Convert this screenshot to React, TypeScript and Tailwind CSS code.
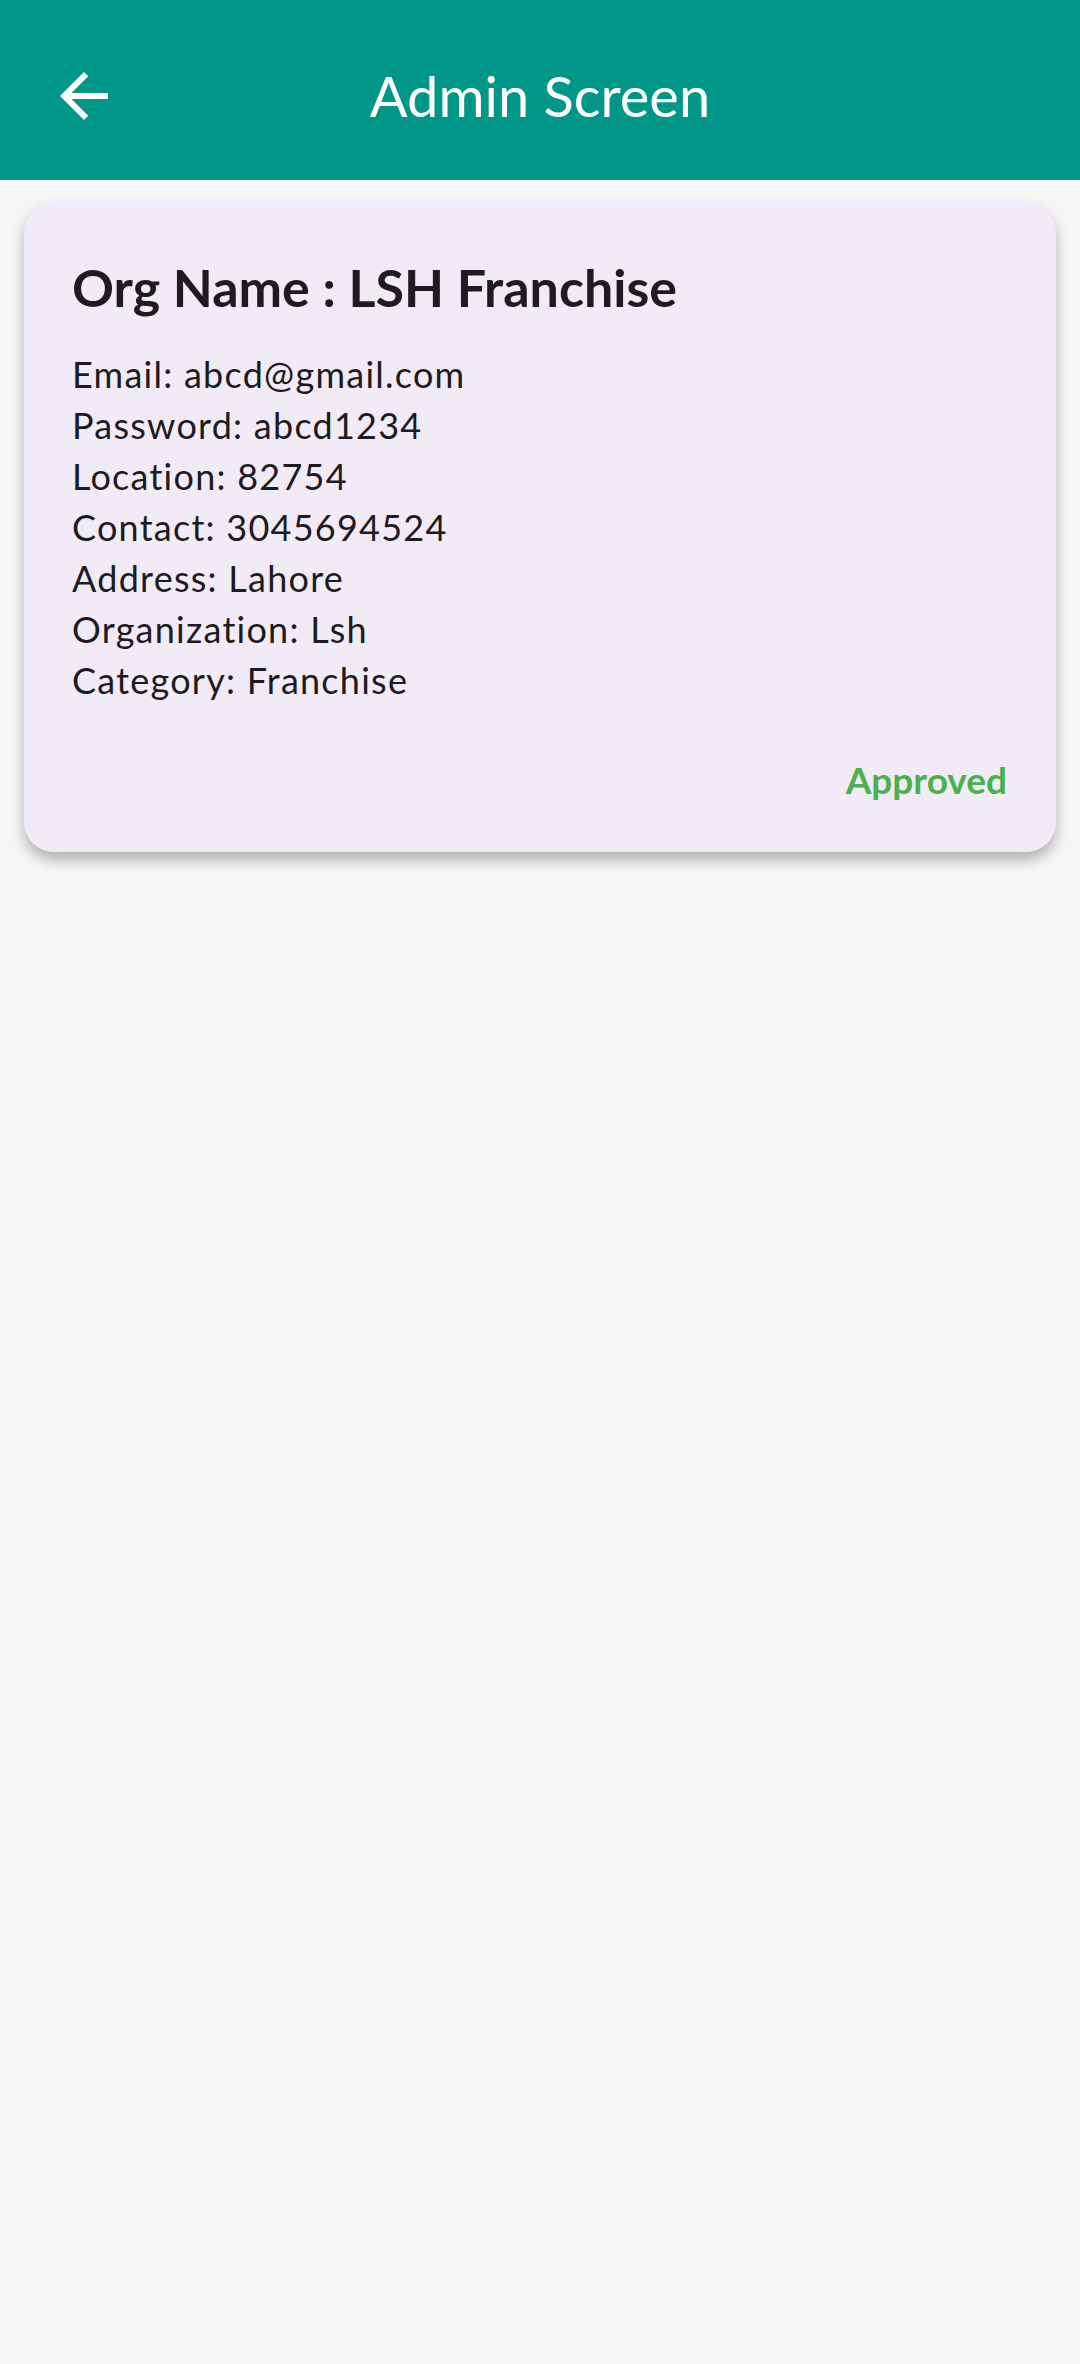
import React from "react";

const fields = [
    { label: "Email", value: "abcd@gmail.com" },
    { label: "Password", value: "abcd1234" },
    { label: "Location", value: "82754" },
    { label: "Contact", value: "3045694524" },
    { label: "Address", value: "Lahore" },
    { label: "Organization", value: "Lsh" },
    { label: "Category", value: "Franchise" },
];

const BackArrow = () => (
    <svg width="72" height="72" viewBox="0 0 24 24" fill="white">
        <path d="M20 11H7.83l5.59-5.59L12 4l-8 8 8 8 1.41-1.41L7.83 13H20v-2z" />
    </svg>
);

export default function App() {
    return (
        <div
            className="min-h-[2364px] w-[1080px] bg-[#f6f6f6]"
            style={{ fontFamily: "Lato, 'Open Sans', sans-serif" }}
        >
            {/* app bar */}
            <div className="relative h-[180px] bg-[#009688] flex items-center justify-center pt-[12px]">
                <div className="absolute left-[48px] top-[60px]">
                    <BackArrow />
                </div>
                <h1 className="text-white text-[56px] leading-[64px] font-normal">
                    Admin Screen
                </h1>
            </div>

            <div className="px-[24px] pt-[22px]">
                <div className="bg-[#f1ebf5] rounded-[30px] shadow-[0_8px_14px_rgba(0,0,0,0.28)] pl-[48px] pr-[49px] pt-[53px] pb-[47px]">
                    <h2 className="text-[#1d1b20] text-[52px] leading-[64px] font-bold">
                        Org Name : LSH Franchise
                    </h2>
                    <div className="mt-[30px] flex flex-col">
                        {fields.map((f) => (
                            <div
                                key={f.label}
                                className="text-[#1d1b20] text-[36px] leading-[51px] tracking-[1.25px]"
                            >
                                {f.label}: {f.value}
                            </div>
                        ))}
                    </div>
                    <div className="mt-[48px] flex justify-end">
                        <span className="text-[#4caf50] text-[37px] leading-[51px] font-bold">
                            Approved
                        </span>
                    </div>
                </div>
            </div>
        </div>
    );
}
